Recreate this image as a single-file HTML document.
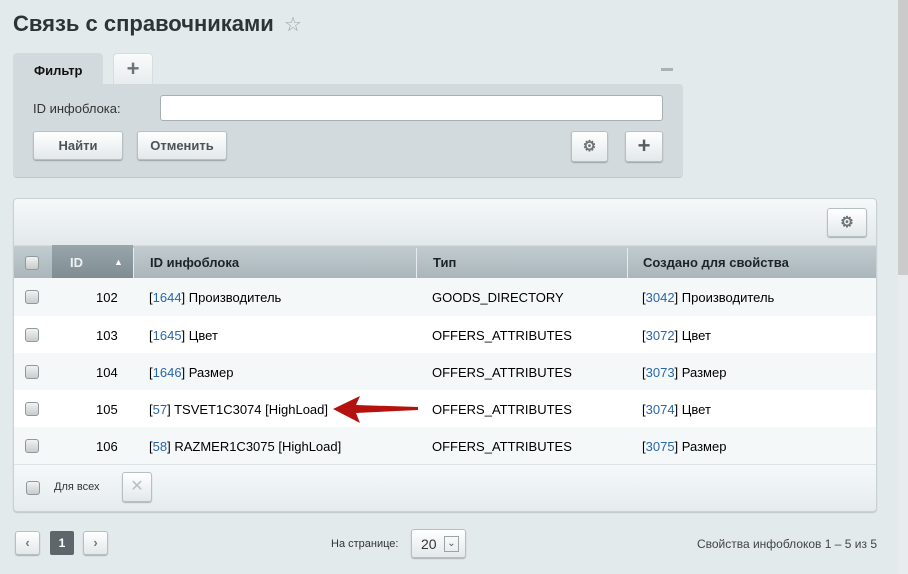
<!DOCTYPE html>
<html><head><meta charset="utf-8"><style>
*{box-sizing:border-box;margin:0;padding:0}
body{width:908px;height:574px;overflow:hidden;background:#e3eaec;font-family:"Liberation Sans",Arial,sans-serif;font-size:13px;color:#000;position:relative}
.a{position:absolute}
.btn{position:absolute;border:1px solid #b6bfc2;border-radius:3px;background:linear-gradient(#ffffff,#e3e8ea);box-shadow:0 1px 1px rgba(0,0,0,.25);font-weight:bold;color:#4a5357;font-size:13px;text-align:center}
.cb{position:absolute;width:14px;height:14px;border:1px solid #8f989b;border-radius:3px;background:linear-gradient(#f2f2f2,#c8cccd)}
.row{position:absolute;left:14px;width:862px;height:37px}
.row span{position:absolute;top:12px;font-size:13px}
.l{color:#2a67a8}
.sep{position:absolute;top:248px;width:1px;height:30px;background:#e6ecee}
</style></head><body>
<div class="a" style="left:898px;top:0;width:10px;height:275px;background:#cbcbcb"></div>
<div class="a" style="left:898px;top:275px;width:10px;height:299px;background:#e9ecee"></div>

<div class="a" style="left:13px;top:11px;font-size:22px;font-weight:bold;color:#2d3336">Связь с справочниками</div>
<div class="a" style="left:284px;top:12px;font-size:20px;color:#9aa3a7">☆</div>

<div class="a" style="left:13px;top:53px;width:90px;height:33px;background:#d3dadd;border-radius:4px 4px 0 0;font-weight:bold;font-size:13px;padding:10px 0 0 21px;color:#111">Фильтр</div>
<div class="a" style="left:113px;top:53px;width:40px;height:31px;background:linear-gradient(#fafbfb,#e8ecee);border-radius:4px 4px 0 0;border:1px solid #d7dddf;border-bottom:none;text-align:center;font-size:22px;color:#6c7477;line-height:30px;font-weight:bold">+</div>
<div class="a" style="left:661px;top:68px;width:12px;height:3px;background:#aab2b5"></div>
<div class="a" style="left:13px;top:84px;width:670px;height:94px;background:#d3dadd;border-radius:0 4px 4px 4px;border-bottom:1px solid #bfc7ca"></div>
<div class="a" style="left:33px;top:101px;color:#333;font-size:13px">ID инфоблока:</div>
<div class="a" style="left:160px;top:95px;width:503px;height:26px;background:#fff;border:1px solid #a6b0b3;border-radius:3px"></div>
<div class="btn" style="left:33px;top:131px;width:90px;height:29px;line-height:27px">Найти</div>
<div class="btn" style="left:137px;top:131px;width:90px;height:29px;line-height:27px">Отменить</div>
<div class="btn" style="left:571px;top:131px;width:37px;height:31px;line-height:29px;font-size:15px;color:#6c7477">⚙</div>
<div class="btn" style="left:625px;top:131px;width:38px;height:31px;line-height:28px;font-size:22px;color:#555d60">+</div>

<div class="a" style="left:13px;top:198px;width:864px;height:314px;background:#eef2f3;border:1px solid #c9d1d4;border-radius:4px;box-shadow:0 1px 1px rgba(0,0,0,.15)"></div>
<div class="a" style="left:14px;top:199px;width:862px;height:46px;background:linear-gradient(#f6f8f9,#e3e9eb);border-radius:4px 4px 0 0"></div>
<div class="btn" style="left:827px;top:208px;width:40px;height:29px;line-height:27px;font-size:15px;color:#6c7477">⚙</div>
<div class="a" style="left:14px;top:245px;width:862px;height:33px;background:linear-gradient(#c2ccd0,#aab6bb);border-top:1px solid #d6dde0"></div>
<div class="a" style="left:52px;top:245px;width:81px;height:33px;background:linear-gradient(#98a5ab,#7f8d93)"></div>
<div class="sep" style="left:133px"></div><div class="sep" style="left:416px"></div><div class="sep" style="left:627px"></div>
<div class="cb" style="left:25px;top:256px"></div>
<div class="a" style="left:70px;top:255px;font-weight:bold;color:#eef2f3">ID</div>
<div class="a" style="left:114px;top:257px;font-size:9px;color:#fff">▲</div>
<div class="a" style="left:150px;top:255px;font-weight:bold;color:#1c2426">ID инфоблока</div>
<div class="a" style="left:433px;top:255px;font-weight:bold;color:#1c2426">Тип</div>
<div class="a" style="left:643px;top:255px;font-weight:bold;color:#1c2426">Создано для свойства</div>

<div class="row" style="top:278px;height:38px;background:#f4f8f9"><div class="cb" style="left:11px;top:12px"></div><span style="left:82px">102</span><span style="left:135px">[<b class="l" style="font-weight:normal">1644</b>] Производитель</span><span style="left:418px">GOODS_DIRECTORY</span><span style="left:628px">[<b class="l" style="font-weight:normal">3042</b>] Производитель</span></div>
<div class="row" style="top:316px;background:#fff"><div class="cb" style="left:11px;top:12px"></div><span style="left:82px">103</span><span style="left:135px">[<b class="l" style="font-weight:normal">1645</b>] Цвет</span><span style="left:418px">OFFERS_ATTRIBUTES</span><span style="left:628px">[<b class="l" style="font-weight:normal">3072</b>] Цвет</span></div>
<div class="row" style="top:353px;background:#f4f8f9"><div class="cb" style="left:11px;top:12px"></div><span style="left:82px">104</span><span style="left:135px">[<b class="l" style="font-weight:normal">1646</b>] Размер</span><span style="left:418px">OFFERS_ATTRIBUTES</span><span style="left:628px">[<b class="l" style="font-weight:normal">3073</b>] Размер</span></div>
<div class="row" style="top:390px;background:#fff"><div class="cb" style="left:11px;top:12px"></div><span style="left:82px">105</span><span style="left:135px">[<b class="l" style="font-weight:normal">57</b>] TSVET1C3074 [HighLoad]</span><span style="left:418px">OFFERS_ATTRIBUTES</span><span style="left:628px">[<b class="l" style="font-weight:normal">3074</b>] Цвет</span></div>
<div class="row" style="top:427px;background:#f4f8f9"><div class="cb" style="left:11px;top:12px"></div><span style="left:82px">106</span><span style="left:135px">[<b class="l" style="font-weight:normal">58</b>] RAZMER1C3075 [HighLoad]</span><span style="left:418px">OFFERS_ATTRIBUTES</span><span style="left:628px">[<b class="l" style="font-weight:normal">3075</b>] Размер</span></div>
<div class="a" style="left:14px;top:464px;width:862px;height:47px;background:linear-gradient(#f5f8f9,#e6ecee);border-top:1px solid #dde4e6;border-radius:0 0 4px 4px"></div>

<svg class="a" style="left:330px;top:395px" width="92" height="30"><path d="M3 14 L30 1 L26 10 L88 12 L88 15 L26 18 L30 28 Z" fill="#b3120e"/></svg>

<div class="cb" style="left:26px;top:481px"></div>
<div class="a" style="left:54px;top:481px;font-size:11px;color:#333">Для всех</div>
<div class="btn" style="left:122px;top:472px;width:30px;height:30px;line-height:28px;font-size:16px;color:#b9bfc1;font-weight:normal">✕</div>

<div class="btn" style="left:15px;top:531px;width:25px;height:24px;line-height:22px;font-size:13px;color:#777">‹</div>
<div class="a" style="left:50px;top:531px;width:24px;height:24px;background:#5d676b;border-radius:2px;color:#fff;font-weight:bold;font-size:12px;text-align:center;line-height:24px">1</div>
<div class="btn" style="left:83px;top:531px;width:25px;height:24px;line-height:22px;font-size:13px;color:#777">›</div>
<div class="a" style="left:331px;top:538px;font-size:11px;color:#333">На странице:</div>
<div class="btn" style="left:411px;top:529px;width:55px;height:29px;font-weight:normal;color:#333;font-size:14px;text-align:left;padding:6px 0 0 9px">20<span style="position:absolute;left:32px;top:6px;width:15px;height:16px;border:1px solid #9aa3a6;font-size:10px;text-align:center;line-height:14px;color:#555">⌄</span></div>
<div class="a" style="right:31px;top:537px;font-size:12px;color:#444">Свойства инфоблоков 1 – 5 из 5</div>
</body></html>
